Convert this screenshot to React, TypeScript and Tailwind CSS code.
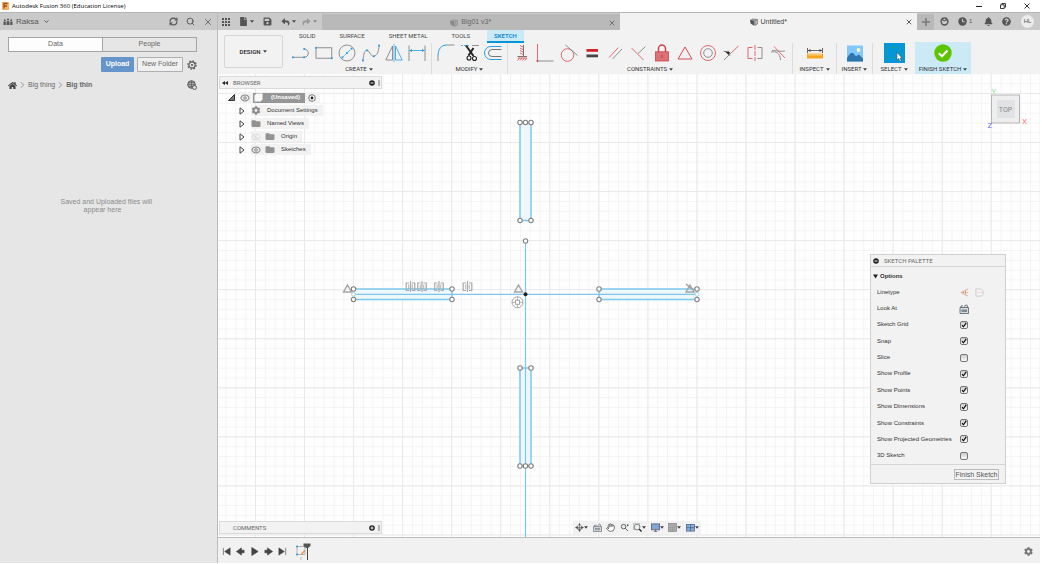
import React from "react";
import { FaBell, FaQuestionCircle, FaHome, FaSave, FaFile, FaFolder, FaCog, FaReply, FaShare } from "react-icons/fa";
import { RefreshCw, Search, X, Hand, Eye, EyeOff, ChevronDown } from "lucide-react";

const BLUE = "#2b9ee0";
const GRAY = "#777";
const RED = "#d9484c";

type IconProps = { children: React.ReactNode };

function Ico({ children }: IconProps) {
  return (
    <svg viewBox="0 0 18 18" className="block h-[18px] w-[18px]" fill="none" stroke={GRAY} strokeWidth="0.8" aria-hidden="true">
      {children}
    </svg>
  );
}

function Dot({ x, y, c = BLUE }: { x: number; y: number; c?: string }) {
  return <rect x={x - 0.9} y={y - 0.9} width="1.8" height="1.8" fill={c} stroke="none" />;
}

function Caret({ className = "text-[#444]" }: { className?: string }) {
  return (
    <svg viewBox="0 0 6 4" className={`h-[3px] w-1 shrink-0 ${className}`} aria-hidden="true">
      <path d="M0 0H6L3 4Z" fill="currentColor" />
    </svg>
  );
}

const createTools: [string, React.ReactNode][] = [
  ["Line", <><path d="M0.8 13.3H12.2M12.2 13.3A4 4 0 0 0 12.2 5" /><Dot x={0.9} y={13.3} /><Dot x={12.2} y={13.3} /><Dot x={12.2} y={5} /></>],
  ["Rectangle", <><rect x="1" y="3.8" width="15.8" height="10.4" /><Dot x={1} y={3.8} /><Dot x={16.8} y={14.2} /></>],
  ["Circle", <><circle cx="9" cy="9" r="8" /><path d="M4.4 13.4L13.6 4.6" stroke={BLUE} strokeDasharray="3 0.8" /><Dot x={4.4} y={13.4} /><Dot x={9} y={9} /><Dot x={13.6} y={4.6} /></>],
  ["Spline", <><path d="M1 16.5C1.500 9 3 5.500 5.500 6.400C8 7.500 9 13.500 12.500 12.200C16 10.500 16.800 6 17 1.500" /><Dot x={1} y={16.5} /><Dot x={5.2} y={6.4} /><Dot x={12} y={12.2} /><Dot x={17} y={1.6} /></>],
  ["Mirror", <><path d="M7.500 2V16H0.800Z" /><path d="M10.500 2V16H17.200Z" stroke={BLUE} /><path d="M9 0V18" stroke={BLUE} strokeWidth="0.7" /></>],
  ["Dimension", <><path d="M1 1.500V17M17 1.500V17" /><path d="M1.500 6.500H16.500" stroke={BLUE} /><path d="M1.200 6.500L4 5V8ZM16.800 6.500L14 5V8Z" fill={BLUE} stroke="none" /></>],
];

const modifyTools: [string, React.ReactNode][] = [
  ["Fillet", <><path d="M1 17V12M10 1H17.500" /><path d="M1 12C1 5 4 1 10 1" stroke={BLUE} strokeWidth="1" /></>],
  ["Trim", <><path d="M0 1.500H9" stroke={BLUE} strokeDasharray="2 1" /><path d="M11 1.500H18" /><path d="M5 1.500L12.500 12M12.500 4L7.500 11.500" stroke="#222" strokeWidth="2" /><circle cx="8" cy="14" r="2" stroke="#222" strokeWidth="1.100" /><circle cx="13.500" cy="14.500" r="2" stroke="#222" strokeWidth="1.100" /></>],
  ["Offset", <><path d="M17.500 2.500H7A6.500 6.500 0 0 0 7 15.500H17.500" stroke={BLUE} strokeWidth="1" /><path d="M17.500 5.500H8A3.500 3.500 0 0 0 8 12.500H17.500" strokeWidth="1" /></>],
];

const constraintTools: [string, React.ReactNode][] = [
  ["Horizontal", <><path d="M10.500 1V12M4.500 12.500H14" strokeWidth="1" /><path d="M7 1.500L10 3M7 4L10 5.500M7 6.500L10 8M7 9L10 10.500M4.500 16.500L6.500 14M7 16.500L9 14M9.500 16.500L11.500 14M12 16.500L14 14M5 14H14" stroke={RED} /></>],
  ["Perpendicular", <><path d="M1.500 17H17.500" /><path d="M1.500 0V17" stroke={RED} /><Dot x={1.500} y={17} c={RED} /></>],
  ["Tangent", <><circle cx="7.500" cy="11" r="6.300" stroke={RED} /><path d="M5.500 1L17.500 11.500" /></>],
  ["Equal", <><rect x="3.500" y="5" width="11.500" height="2.800" fill="#cf2328" stroke="none" /><rect x="3.500" y="10.500" width="11.500" height="2.800" fill="#444" stroke="none" /></>],
  ["Parallel", <><path d="M3 13.500L12.500 3.500" stroke={RED} /><path d="M6.500 15L16 5" /></>],
  ["Coincident", <><path d="M9 9.500L16.500 2.500" /><path d="M2.500 4L14.500 16" stroke={RED} /></>],
  ["Fix", <><path d="M5.500 8V4.500A3.500 3.500 0 0 1 12.500 4.500V8" stroke="#c9474a" strokeWidth="1.500" /><rect x="2.500" y="7.800" width="13" height="9.200" fill="#dc7276" stroke="#c9474a" /><path d="M9 11V14" stroke="#b7282d" /></>],
  ["Midpoint", <path d="M9 3L16 15H2Z" stroke={RED} strokeWidth="1" />],
  ["Concentric", <><circle cx="9" cy="9" r="7.500" stroke={RED} /><circle cx="9" cy="9" r="4.300" /></>],
  ["Collinear", <><path d="M9 9L16.500 2" stroke={RED} /><path d="M2 16L9 9M1.500 7L7 9.500M6 6.500L8 12" /><path d="M3 7L8 8.200L6.500 11Z" fill="#222" stroke="none" /></>],
  ["Symmetry", <><path d="M6.500 3.500H2V14.500H6.500" stroke={RED} /><path d="M9 1V17" stroke={RED} strokeDasharray="5 1" /><path d="M11.500 3.500H16V14.500H11.500" /></>],
  ["Curvature", <><path d="M2 8C7 7 11 9 11.500 16M3 6.500C7 6 9 8 16 7" /><path d="M5 2.500L16 14" stroke={RED} /></>],
];

function ToolGroup({ label, tools, className }: { label: string; tools: [string, React.ReactNode][]; className: string }) {
  return (
    <section className={`flex shrink-0 flex-col items-stretch border-r border-[#dcdcdc] pt-px ${className}`}>
      <div className="flex justify-between">
        {tools.map(([name, art]) => (
          <button key={name} type="button" aria-label={name}><Ico>{art}</Ico></button>
        ))}
      </div>
      <GroupLabel>{label}</GroupLabel>
    </section>
  );
}

function GroupLabel({ children }: { children: string }) {
  return (
    <button type="button" className="mt-[3px] flex items-center justify-center gap-[2px] self-center font-[Roboto,sans-serif] text-[6px] leading-[8px] whitespace-nowrap text-[#333]">
      {children}<Caret />
    </button>
  );
}

function Cube({ className }: { className: string }) {
  return (
    <svg viewBox="0 0 8 8" className={`h-2 w-2 ${className}`} aria-hidden="true">
      <path d="M0 1.500L3 0.500L8 1L5 2.200Z" fill="currentColor" opacity="0.600" />
      <path d="M0 1.800L4.300 2.600V7.800L0.500 5.500Z" fill="currentColor" />
      <path d="M4.900 2.600L7.800 1.500V5.500L4.900 7.500Z" fill="currentColor" fillOpacity="0.350" stroke="currentColor" strokeWidth="0.600" />
    </svg>
  );
}

function DocTab({ title, active }: { title: string; active?: boolean }) {
  return (
    <div className={`relative flex min-w-0 flex-1 items-center justify-center pt-px text-[7px] ${active ? "bg-[#f2f2f2] text-[#444]" : "mt-px bg-[#b9b9b9] text-[#666]"}`}>
      <button type="button" className="flex items-center gap-[3px]">
        <Cube className={active ? "text-[#555]" : "text-[#888]"} />{title}
      </button>
      <button type="button" aria-label={`Close ${title}`} className="absolute right-1"><X className="h-2 w-2" strokeWidth={2.500} /></button>
    </div>
  );
}

function Chevron() {
  return (
    <svg viewBox="0 0 6 8" className="mx-[3px] h-2 w-[5px]" fill="none" stroke="#b5b5b5" strokeWidth="1.300" aria-hidden="true"><path d="M1 0.500L4.500 4L1 7.500" /></svg>
  );
}

function LeftPanel() {
  return (
    <aside className="flex w-[218px] shrink-0 flex-col border-r border-[#bbb] bg-[#e6e6e6] text-[7px] text-[#666]">
      <header className="flex h-[17px] items-center bg-[#cacaca] pr-1 pl-[3px] text-[#555]">
        <svg viewBox="0 0 10 8" className="h-2 w-[10px]" fill="currentColor" aria-hidden="true">
          <circle cx="1.800" cy="2.200" r="0.900" /><circle cx="5" cy="1.500" r="1.100" /><circle cx="8.200" cy="2.200" r="0.900" />
          <path d="M0.500 3.600H2.800V7H0.500ZM3.600 3.200H6.400V7H3.600ZM7.200 3.600H9.500V7H7.200Z" />
        </svg>
        <button type="button" className="ml-[3px] flex items-center gap-1 text-[8px]">Raksa<ChevronDown className="h-[7px] w-[7px]" strokeWidth={3} /></button>
        <div className="ml-auto flex items-center gap-2">
          <button type="button" aria-label="Refresh"><RefreshCw className="h-[9px] w-[9px]" strokeWidth={3} /></button>
          <button type="button" aria-label="Search"><Search className="h-[9px] w-[9px]" strokeWidth={2.500} /></button>
          <button type="button" aria-label="Close panel"><X className="h-[10px] w-[10px]" strokeWidth={2} /></button>
        </div>
      </header>
      <div className="flex flex-col px-2 pt-[7px]">
        <div className="mr-3 flex h-[15px] border border-[#a5a5a5]">
          <button type="button" className="flex-1 border-r border-[#a5a5a5] bg-[#fdfdfd]">Data</button>
          <button type="button" className="flex-1">People</button>
        </div>
        <div className="mt-[5px] mr-3 flex h-[15px] items-stretch justify-end gap-[3px]">
          <button type="button" className="w-[33px] rounded-[1px] bg-[#6595cb] font-bold text-white">Upload</button>
          <button type="button" className="w-[46px] rounded-[1px] border border-[#b0b0b0] bg-[#f0f0f0]">New Folder</button>
          <button type="button" aria-label="Settings" className="ml-px">
            <svg viewBox="0 0 10 10" className="h-[10px] w-[10px]" fill="none" stroke="#555" aria-hidden="true"><circle cx="5" cy="5" r="3.100" strokeWidth="1.200" /><circle cx="5" cy="5" r="1.100" fill="#555" stroke="none" /><circle cx="5" cy="5" r="4.200" strokeWidth="1.200" strokeDasharray="1.500 1.800" /></svg>
          </button>
        </div>
        <nav className="mt-[9px] mr-3 flex h-2 items-center">
          <a href="#home" aria-label="Home"><FaHome className="h-[9px] w-[9px] text-[#444]" /></a>
          <Chevron />
          <a href="#big-thing">Big thing</a>
          <Chevron />
          <a href="#big-thin" className="font-bold">Big thin</a>
          <button type="button" aria-label="Open on the web" className="ml-auto">
            <svg viewBox="0 0 10 10" className="h-[10px] w-[10px]" fill="none" stroke="#555" strokeWidth="0.900" aria-hidden="true"><circle cx="4.500" cy="4.500" r="3.800" fill="#aaa" /><path d="M0.700 4.500H8.300M4.500 0.700V8.300M1.500 2.500H7.500M1.500 6.500H7.500" strokeWidth="0.600" /><circle cx="7.500" cy="7.500" r="2" fill="#ddd" /></svg>
          </button>
        </nav>
      </div>
      <p className="mx-auto mt-[109px] w-24 pr-3 text-center leading-[8px] whitespace-nowrap text-[#8a8a8a]">Saved and Uploaded files will<br />appear here</p>
    </aside>
  );
}

function TabBar() {
  return (
    <div className="flex h-[17px] bg-[#cacaca] text-[#555]">
      <div className="flex w-[104px] shrink-0 items-center pl-1">
        <button type="button" aria-label="Applications">
          <svg viewBox="0 0 8 8" className="h-2 w-2" fill="currentColor" aria-hidden="true">
            {[0, 3, 6].map((y) => [0, 3, 6].map((x) => <rect key={`${x}-${y}`} x={x} y={y} width="2" height="2" />))}
          </svg>
        </button>
        <button type="button" aria-label="File" className="ml-[9px] flex items-center gap-[2px]"><FaFile className="h-[9px] w-[9px]" /><Caret /></button>
        <button type="button" aria-label="Save" className="ml-[9px]"><FaSave className="h-[9px] w-[9px]" /></button>
        <button type="button" aria-label="Undo" className="ml-[9px] flex items-center gap-[2px]"><FaReply className="h-2 w-[9px]" /><Caret /></button>
        <button type="button" aria-label="Redo" className="ml-[6px] flex items-center gap-[2px] text-[#999]"><FaShare className="h-2 w-[9px]" /><Caret className="text-[#888]" /></button>
      </div>
      <DocTab title="Big01 v3*" />
      <DocTab title="Untitled*" active />
      <div className="flex w-[123px] shrink-0 items-center text-[6px]">
        <button type="button" aria-label="New tab" className="mt-px flex h-4 w-[17px] items-center justify-center bg-[#b9b9b9]">
          <svg viewBox="0 0 8 8" className="h-2 w-2" stroke="#777" strokeWidth="1.500" aria-hidden="true"><path d="M0 4H8M4 0V8" /></svg>
        </button>
        <button type="button" aria-label="Extensions" className="ml-[6px]">
          <svg viewBox="0 0 10 10" className="h-[9px] w-[9px]" fill="none" stroke="currentColor" strokeWidth="1.600" aria-hidden="true"><circle cx="5" cy="5" r="3.800" /><path d="M2 1.500Q4 5 5.500 4Q7 2.500 8.500 4" strokeWidth="1.200" /></svg>
        </button>
        <button type="button" aria-label="Job status" className="ml-[9px] flex items-center gap-[2px]">
          <svg viewBox="0 0 10 10" className="h-[9px] w-[9px]" aria-hidden="true"><circle cx="5" cy="5" r="4.700" fill="currentColor" /><path d="M5 2V5.300H7.500" fill="none" stroke="#ddd" /></svg>1
        </button>
        <button type="button" aria-label="Notifications" className="ml-3"><FaBell className="h-[9px] w-[9px]" /></button>
        <button type="button" aria-label="Help" className="ml-[9px]"><FaQuestionCircle className="h-[9px] w-[9px]" /></button>
        <button type="button" className="mr-[6px] ml-auto flex h-[13px] w-[13px] items-center justify-center rounded-full bg-[#ececec]">HL</button>
      </div>
    </div>
  );
}

function Toolbar() {
  return (
    <div className="flex h-11 bg-[#f2f2f2]">
      <button type="button" className="mt-[5px] ml-[6px] flex h-[33px] w-[59px] shrink-0 items-center justify-center gap-[3px] rounded-[2px] border border-[#d6d6d6] font-[Roboto,sans-serif] text-[6px] font-medium text-[#222]">
        DESIGN<Caret />
      </button>
      <div className="ml-1 flex min-w-0 flex-1 flex-col">
        <nav className="flex h-[13px] items-stretch gap-[10px] pl-[5px] font-[Roboto,sans-serif] text-[6px] text-[#444]">
          {["SOLID", "SURFACE", "SHEET METAL", "TOOLS"].map((t) => (
            <button key={t} type="button" className="px-[7px] pb-[3px]">{t}</button>
          ))}
          <button type="button" className="border-b-2 border-[#0696d7] bg-[#cce9f6] px-[7px] pb-px font-bold text-[#1a8fce]">SKETCH</button>
        </nav>
        <div className="flex flex-1 items-stretch">
          <ToolGroup label="CREATE" tools={createTools} className="w-[145px] px-[5px]" />
          <ToolGroup label="MODIFY" tools={modifyTools} className="w-[76px] px-[5px]" />
          <ToolGroup label="CONSTRAINTS" tools={constraintTools} className="w-[285px] px-[5px]" />
          <section className="flex w-11 flex-col items-center border-r border-[#dcdcdc] pt-px">
            <button type="button" aria-label="Measure">
              <Ico>
                <path d="M1.500 4V9M16.500 4V9M2 6.500H16" stroke="#444" /><path d="M2 6.500L4.500 5V8ZM16 6.500L13.500 5V8Z" fill="#444" stroke="none" />
                <rect x="1" y="9.500" width="16" height="5" fill="#f7a51c" stroke="none" /><path d="M3 9.500V11.500M5 9.500V11.500M7 9.500V11.500M9 9.500V11.500M11 9.500V11.500M13 9.500V11.500M15 9.500V11.500" stroke="#fff" />
              </Ico>
            </button>
            <GroupLabel>INSPECT</GroupLabel>
          </section>
          <section className="flex w-9 flex-col items-center border-r border-[#dcdcdc] pt-px">
            <button type="button" aria-label="Insert image">
              <Ico>
                <rect x="1" y="1.500" width="16" height="16" fill="#82c9fb" stroke="none" />
                <path d="M1 14C4 9 6 7.500 8 10L10 12.500C12 10.500 13 10.500 14 11.500L17 14.500V17.500H1Z" fill="#2d76ae" stroke="none" /><circle cx="12.500" cy="6" r="1.900" fill="#fff6c4" stroke="none" />
              </Ico>
            </button>
            <GroupLabel>INSERT</GroupLabel>
          </section>
          <section className="flex w-[42px] flex-col items-center">
            <button type="button" aria-label="Select" className="flex h-5 w-[21px] items-center justify-center bg-[#0696d7]">
              <Ico>
                <rect x="2" y="3.500" width="13" height="10" stroke="#1aa77a" strokeDasharray="1.500 1" /><path d="M12 8.500V16L13.700 14.500L15 17.500L16.300 17L15 14H17Z" fill="#fff" stroke="#444" strokeWidth="0.500" />
              </Ico>
            </button>
            <div className="-mt-px"><GroupLabel>SELECT</GroupLabel></div>
          </section>
          <section className="-mt-px flex w-14 flex-col items-center bg-[#cce9f6] pt-[2px]">
            <button type="button" aria-label="Finish sketch">
              <Ico><circle cx="9" cy="9" r="8.700" fill="#5cc400" stroke="none" /><path d="M4.800 9.200L8 12.200L13.500 6.500" stroke="#fff" strokeWidth="2.200" /></Ico>
            </button>
            <GroupLabel>FINISH SKETCH</GroupLabel>
          </section>
        </div>
      </div>
    </div>
  );
}

function Node({ x, y }: { x: number; y: number }) {
  return <circle cx={x} cy={y} r="2.200" fill="#fff" stroke="#808080" strokeWidth="1.100" />;
}

function SymmetryMark({ x }: { x: number }) {
  return (
    <g fill="none" stroke="#aaa" strokeWidth="1.200">
      <path d={`M${x - 1.500} 283H${x - 4.300}V290.500H${x - 1.500}M${x + 1.500} 283H${x + 4.300}V290.500H${x + 1.500}M${x} 281V292`} /><path d={`M${x - 1.800} 284.500V289M${x + 1.800} 284.500V289`} strokeWidth="0.900" />
    </g>
  );
}

function SketchDrawing() {
  return (
    <svg className="absolute inset-0 h-full w-full" aria-label="Sketch canvas">
      <defs>
        <pattern id="minor" x="37" y="19" width="9.810" height="9.810" patternUnits="userSpaceOnUse"><path d="M0 0.500H9.810M0.500 0V9.810" stroke="#f4f4f4" fill="none" /></pattern>
        <pattern id="major" x="37" y="19" width="49.050" height="49.050" patternUnits="userSpaceOnUse"><path d="M0 0.500H49.050M0.500 0V49.050" stroke="#e9e9e9" fill="none" /></pattern>
      </defs>
      <rect width="100%" height="100%" fill="url(#minor)" />
      <rect width="100%" height="100%" fill="url(#major)" />
      <g transform="translate(-218 -74)">
        <g fill="#eef8fc" stroke="#7cc8ec" strokeWidth="1.500">
          <rect x="520" y="122.500" width="11" height="98" /><rect x="520" y="368" width="11" height="98" />
          <rect x="353.500" y="289" width="98.500" height="10.500" /><rect x="599" y="289" width="98" height="10.500" />
        </g>
        <path d="M353.500 294.300H697M525.500 241V540" stroke="#7cc8ec" strokeWidth="1.200" />
        <g fill="none" stroke="#a5a5a5" strokeWidth="1.400">
          <path d="M347.500 285L351.500 292H343.500ZM518.500 285L522.500 292H514.500ZM690 285L694 292H686ZM686 284L694 291" />
          <circle cx="517.500" cy="302.300" r="5.500" strokeWidth="1" /><rect x="515.500" y="300.300" width="4" height="4" strokeWidth="1" /><path d="M517.500 297V300M517.500 304.500V308M512 302.300H515M520 302.300H523" strokeWidth="0.800" />
        </g>
        <SymmetryMark x={410.500} /><SymmetryMark x={422} /><SymmetryMark x={439} /><SymmetryMark x={467.500} />
        {[[520, 122.500], [525.500, 122.500], [531, 122.500], [520, 220.500], [531, 220.500], [525.500, 241], [353.500, 289], [353.500, 299.500], [452, 289], [452, 299.500], [599, 289], [599, 299.500], [697, 289], [697, 299.500], [520, 368], [531, 368], [520, 466], [525.500, 466], [531, 466]].map(([x, y]) => (
          <Node key={`${x}-${y}`} x={x} y={y} />
        ))}
        <circle cx="353.500" cy="294.300" r="2" fill="#fff" stroke="#a9cfe0" /><circle cx="697" cy="294.300" r="2" fill="#fff" stroke="#a9cfe0" />
        <circle cx="525.500" cy="294.300" r="2" fill="#222" />
      </g>
    </svg>
  );
}

function PanelBar({ title, collapse, mark }: { title: string; collapse?: boolean; mark: string }) {
  return (
    <div className="flex h-[13px] w-[163px] items-center border border-[#dadada] bg-[#f2f2f2] font-[Roboto,sans-serif] text-[6px] text-[#666]">
      <button type="button" aria-label="Collapse" className="ml-[2px] w-[7px]">
        {collapse && <svg viewBox="0 0 6 4" className="h-1 w-[6px]" fill="#222" aria-hidden="true"><path d="M3 0V4L0 2ZM6 0V4L3 2Z" /></svg>}
      </button>
      <span className="ml-1">{title}</span>
      <button type="button" aria-label={`${title} options`} className="ml-auto"><RoundMark d={mark} /></button>
      <span className="mr-px ml-[3px] h-[6px] w-[2px] bg-[#b5b5b5]" />
    </div>
  );
}

function RoundMark({ d }: { d: string }) {
  return (
    <svg viewBox="0 0 6 6" className="block h-[6px] w-[6px]" aria-hidden="true"><circle cx="3" cy="3" r="2.800" fill="#222" /><path d={d} stroke="#fff" strokeWidth="0.900" /></svg>
  );
}

function TreeRow({ label, icon, eye }: { label: string; icon: "gear" | "folder"; eye?: "on" | "off" }) {
  return (
    <li className="flex h-[13px] items-center">
      <button type="button" aria-label={`Expand ${label}`} className="flex w-[12px]">
        <svg viewBox="0 0 6 8" className="h-2 w-[6px]" fill="#fff" stroke="#444" strokeWidth="1" aria-hidden="true"><path d="M1 0.800L5 4L1 7.200Z" /></svg>
      </button>
      <span className="flex h-[11px] items-center bg-[#f2f2f2] pr-[5px]">
        {eye === "on" && <Eye className="mr-[4px] h-[10px] w-[10px] text-[#888]" strokeWidth={2.500} />}
        {eye === "off" && <EyeOff className="mr-[4px] h-[10px] w-[10px] text-[#d5d5d5]" />}
        {icon === "gear" ? <FaCog className="h-[9px] w-[10px] text-[#8c8c8c]" /> : <FaFolder className="h-[9px] w-[10px] text-[#929292]" />}
        <span className="ml-[6px]">{label}</span>
      </span>
    </li>
  );
}

function BrowserTree() {
  return (
    <div className="text-[6px] text-[#333]">
      <div className="ml-[9px] flex h-[13px] items-center">
        <svg viewBox="0 0 7 7" className="h-[7px] w-[7px]" aria-hidden="true"><path d="M6.500 0.500V6.500H0.500Z" fill="#777" stroke="#333" /></svg>
        <span className="ml-[5px] flex h-[11px] items-center bg-[#f2f2f2] pr-1">
          <Eye className="h-[10px] w-[10px] text-[#888]" strokeWidth={2.500} />
          <span className="ml-[3px] flex h-[10px] items-center bg-[#969696] pr-[5px] pl-px font-bold text-white">
            <svg viewBox="0 0 9 9" className="mr-[8px] h-[9px] w-[9px]" aria-hidden="true"><path d="M0.500 2.500L2.500 0.500H8.500V6.500L6.500 8.500H0.500Z" fill="#f8f8f8" stroke="#ccc" strokeWidth="0.600" /></svg>
            (Unsaved)
          </span>
          <svg viewBox="0 0 8 8" className="ml-[3px] h-2 w-2" aria-hidden="true"><circle cx="4" cy="4" r="3.300" fill="#fff" stroke="#555" strokeWidth="0.800" /><circle cx="4" cy="4" r="1.400" fill="#222" /></svg>
        </span>
      </div>
      <ul className="ml-5">
        <TreeRow label="Document Settings" icon="gear" />
        <TreeRow label="Named Views" icon="folder" />
        <TreeRow label="Origin" icon="folder" eye="off" />
        <TreeRow label="Sketches" icon="folder" eye="on" />
      </ul>
    </div>
  );
}

const options: [string, boolean][] = [
  ["Sketch Grid", true], ["Snap", true], ["Slice", false], ["Show Profile", true], ["Show Points", true],
  ["Show Dimensions", true], ["Show Constraints", true], ["Show Projected Geometries", true], ["3D Sketch", false],
];

function CameraIcon() {
  return (
    <svg viewBox="0 0 10 10" className="block h-[10px] w-[10px]" aria-hidden="true">
      <path d="M1 3.500H9.500V9.500H1ZM2 3.500V2H4M5 2.500L7.500 0.800L8.500 2V3.500" fill="#d5dbe0" stroke="#56606a" strokeWidth="0.800" /><path d="M2.500 5.500H8V8H2.500Z" fill="#7f8b96" />
    </svg>
  );
}

function SketchPalette() {
  return (
    <section className="absolute top-[180px] right-[34px] w-[136px] border border-[#d0d0d0] bg-[#f2f2f2] text-[6px] text-[#333]">
      <header className="flex h-3 items-center gap-[5px] border-b border-[#d5d5d5] pl-[2px] font-[Roboto,sans-serif] text-[#666]"><RoundMark d="M1.500 3H4.500" />SKETCH PALETTE</header>
      <button type="button" className="flex h-[17px] items-center gap-[2px] pt-px pl-[2px] font-bold"><svg viewBox="0 0 6 5" className="h-[5px] w-[5px]" aria-hidden="true"><path d="M0 0H6L3 5Z" fill="#222" /></svg>Options</button>
      <div className="grid h-[180px] auto-rows-fr pl-[6px]">
        <div className="flex items-center">
          <span className="w-[83px]">Linetype</span>
          <button type="button" aria-label="Construction"><svg viewBox="0 0 10 10" className="h-[9px] w-[9px]" fill="none" aria-hidden="true"><path d="M9 1L1 5L9 9" stroke="#c99a84" strokeWidth="0.800" /><path d="M3 5H9M6 3V7" stroke="#e0814f" strokeDasharray="1.500 1" /></svg></button>
          <button type="button" aria-label="Centerline" className="ml-[6px]"><svg viewBox="0 0 10 10" className="h-[9px] w-[9px]" fill="none" aria-hidden="true"><path d="M1 1H7L9 3V7L7 9H1Z" stroke="#ccc" /><path d="M1 5H9" stroke="#efc3ae" strokeWidth="0.700" strokeDasharray="1.500 1" /></svg></button>
        </div>
        <div className="flex items-center"><span className="w-[82px]">Look At</span><button type="button" aria-label="Look At"><CameraIcon /></button></div>
        {options.map(([name, on]) => (
          <label key={name} className="flex items-center whitespace-nowrap">
            <span className="w-[83px]">{name}</span>
            <span className="grid h-2 w-2 place-items-center">
              <input type="checkbox" defaultChecked={on} className="peer col-start-1 row-start-1 h-2 w-2 appearance-none rounded-[2px] border border-[#777] bg-linear-to-b from-[#ccc] to-[#fafafa]" />
              <svg viewBox="0 0 6 6" className="pointer-events-none invisible col-start-1 row-start-1 h-[6px] w-[6px] peer-checked:visible" aria-hidden="true"><path d="M1 3.200L2.400 4.800L5.200 0.900" fill="none" stroke="#111" strokeWidth="1.200" /></svg>
            </span>
          </label>
        ))}
      </div>
      <footer className="flex h-[19px] items-center justify-end border-t border-[#d5d5d5] pt-px pr-[6px]">
        <button type="button" className="flex h-[11px] w-[45px] items-center justify-center border border-[#bbb] text-[7px] leading-[8px] whitespace-nowrap text-[#555]">Finish Sketch</button>
      </footer>
    </section>
  );
}

function ViewCube() {
  return (
    <div className="absolute top-[10px] right-[10px] h-[46px] w-[46px]" aria-label="View cube">
      <svg viewBox="0 0 46 46" className="h-full w-full font-[Roboto,sans-serif]" fontSize="8" aria-hidden="true">
        <text x="7.500" y="9.500" fill="#8fe89a">Y</text>
        <rect x="7.500" y="11" width="28" height="28" fill="#ededed" fillOpacity="0.950" stroke="#b5b5b5" />
        <rect x="13" y="16" width="18" height="18" fill="#e1e2e6" />
        <text x="21.500" y="27.500" fontSize="7" fill="#888" textAnchor="middle">TOP</text>
        <text x="38" y="39.500" fill="#ff7b7b">X</text><text x="3.500" y="43.500" fill="#6a6aff">Z</text>
      </svg>
    </div>
  );
}

const navTools: [string, boolean, React.ReactNode][] = [
  ["Orbit", true, <path key="o" d="M5 0.500V9.500M5 0.500L4 2.500H6ZM5 9.500L4 7.500H6ZM0.500 5L3 3.500V6.500ZM9.500 5L7 3.500V6.500ZM2 5H8M2.500 6.500Q5 8 7.500 6.500" fill="#555" stroke="#555" strokeWidth="0.600" />],
  ["Look at", false, <path key="l" d="M0.500 4H9.500V9.500H0.500ZM1.500 4V2.500H4M5 3L7.500 1L8.500 2.500V4M2.500 6H7.500V7.500H2.500Z" fill="#dde2e6" stroke="#66707a" strokeWidth="0.800" />],
  ["Pan", false, <Hand key="h" x="0" y="0" width="10" height="10" color="#444" fill="#fff" strokeWidth={2} />],
  ["Zoom", false, <path key="z" d="M5.700 5.700L9 9M4 1.500A2.500 2.500 0 1 0 4 6.500A2.500 2.500 0 1 0 4 1.500ZM7.500 2.500H9.500M8.500 1.500V3.500" fill="#e6f0ee" stroke="#555" />],
  ["Fit", true, <g key="f"><rect x="0.500" y="0.500" width="7" height="7" fill="none" stroke="#aaa" strokeWidth="0.600" /><circle cx="4.500" cy="4.500" r="3.200" fill="#e8f3f0" stroke="#777" /><path d="M7 7L9.500 9.500" stroke="#222" strokeWidth="1.500" /></g>],
  ["Display settings", true, <g key="d"><rect x="0.500" y="1" width="9" height="6.500" fill="#7fa7d9" stroke="#667" /><path d="M3 9.300H7M5 7V9" stroke="#667" /></g>],
  ["Grid and snaps", true, <g key="g"><rect x="0.500" y="0.500" width="9" height="9" fill="#b5b5b5" stroke="#777" strokeWidth="0.700" /><path d="M3 1V9M5 1V9M7 1V9M1 3H9M1 5H9M1 7H9" stroke="#888" strokeWidth="0.400" /></g>],
  ["Viewports", true, <g key="v" fill="#86acd8" stroke="#456188" strokeWidth="0.800"><rect x="0.500" y="1.500" width="9" height="7.500" /><path d="M5 1.500V9M0.500 5.200H9.500" /></g>],
];

function Timeline() {
  const play = ["M1.500 1V9M9 1V9L3 5Z", "M6 1V9L0.500 5ZM6 3.500H9V6.500H6Z", "M2 0.500V9.500L9 5Z", "M4 1V9L9.500 5ZM1 3.500H4V6.500H1Z", "M8.500 1V9M1 1V9L7 5Z"];
  return (
    <footer className="flex h-[26px] items-center border-t border-[#bdbdbd] bg-[#f1f1f1] pr-[7px] pl-1">
      <div className="flex items-center gap-[5px] pt-px">
        {play.map((d, i) => (
          <button key={d} type="button" aria-label={["First", "Previous", "Play", "Next", "Last"][i]}>
            <svg viewBox="0 0 10 10" className="block h-[9px] w-[9px]" fill="#444" stroke="#444" strokeWidth="0.700" aria-hidden="true"><path d={d} /></svg>
          </button>
        ))}
      </div>
      <svg viewBox="0 0 18 18" className="ml-2 h-[18px] w-[18px]" fill="none" aria-hidden="true">
        <rect x="2" y="4.500" width="8" height="8" stroke="#999" strokeWidth="0.700" /><Dot x={2} y={4.500} /><Dot x={2} y={12.500} /><Dot x={10} y={4.500} />
        <path d="M6 12.500L10 8.500" stroke="#e8924a" strokeWidth="1.500" /><path d="M8.500 1.500H15.500V4L13 6H11.500L8.500 4Z" fill="#555" /><path d="M12.500 5V18" stroke="#444" /><path d="M6 15V18" stroke="#bbb" />
      </svg>
      <button type="button" aria-label="Timeline settings" className="ml-auto pt-px"><FaCog className="block h-[9px] w-[9px] text-[#777]" /></button>
    </footer>
  );
}

export default function App() {
  return (
    <div className="flex min-h-screen flex-col bg-white pr-[2px] pb-px font-['Liberation_Sans',Arial,sans-serif]">
      <header className="flex h-3 items-center pr-[10px] pl-[2px]">
        <svg viewBox="0 0 7 8" className="h-2 w-[7px]" aria-hidden="true"><rect width="7" height="8" fill="#f6b26a" /><path d="M2 6.500V1.500H5.500M2 4H5" stroke="#a34d10" strokeWidth="1.300" fill="none" /></svg>
        <h1 className="ml-[3px] font-['Open_Sans',sans-serif] text-[6px] leading-[12px] text-black">Autodesk Fusion 360 (Education License)</h1>
        <div className="ml-auto flex items-center gap-[18px]">
          <button type="button" aria-label="Minimize"><svg viewBox="0 0 6 6" className="block h-[6px] w-[6px]" stroke="#222" aria-hidden="true"><path d="M0 3.500H6" /></svg></button>
          <button type="button" aria-label="Restore"><svg viewBox="0 0 6 6" className="block h-[6px] w-[6px]" fill="none" stroke="#222" strokeWidth="0.900" aria-hidden="true"><path d="M0.500 1.800H4.200V5.500H0.500ZM1.800 1.500V0.500H5.500V4.200H4.500" /></svg></button>
          <button type="button" aria-label="Close"><svg viewBox="0 0 6 6" className="block h-[6px] w-[6px]" stroke="#222" strokeWidth="0.900" aria-hidden="true"><path d="M0.500 0.500L5.500 5.500M5.500 0.500L0.500 5.500" /></svg></button>
        </div>
      </header>
      <div className="flex flex-1 items-stretch border-t border-[#b5b5b5]">
        <LeftPanel />
        <main className="flex min-w-0 flex-1 flex-col">
          <TabBar />
          <Toolbar />
          <div className="relative flex flex-1 flex-col overflow-hidden bg-[#fefefe]">
            <SketchDrawing />
            <div className="relative flex flex-1 flex-col items-start justify-between pt-[2px] pb-[3px] pl-px">
              <div className="flex flex-col gap-[2px]">
                <PanelBar title="BROWSER" collapse mark="M1.500 3H4.500" />
                <BrowserTree />
              </div>
              <PanelBar title="COMMENTS" mark="M1.500 3H4.500M3 1.500V4.500" />
            </div>
            <ViewCube />
            <SketchPalette />
            <div className="absolute bottom-[3px] left-[355px] flex h-[13px] w-32 items-center justify-between bg-[#f2f2f2] px-[2px]">
              {navTools.map(([name, menu, art]) => (
                <button key={name} type="button" aria-label={name} className="flex items-center">
                  <svg viewBox="0 0 10 10" className="h-[9px] w-[9px]" aria-hidden="true">{art}</svg>
                  {menu && <Caret />}
                </button>
              ))}
            </div>
          </div>
          <Timeline />
        </main>
      </div>
    </div>
  );
}
